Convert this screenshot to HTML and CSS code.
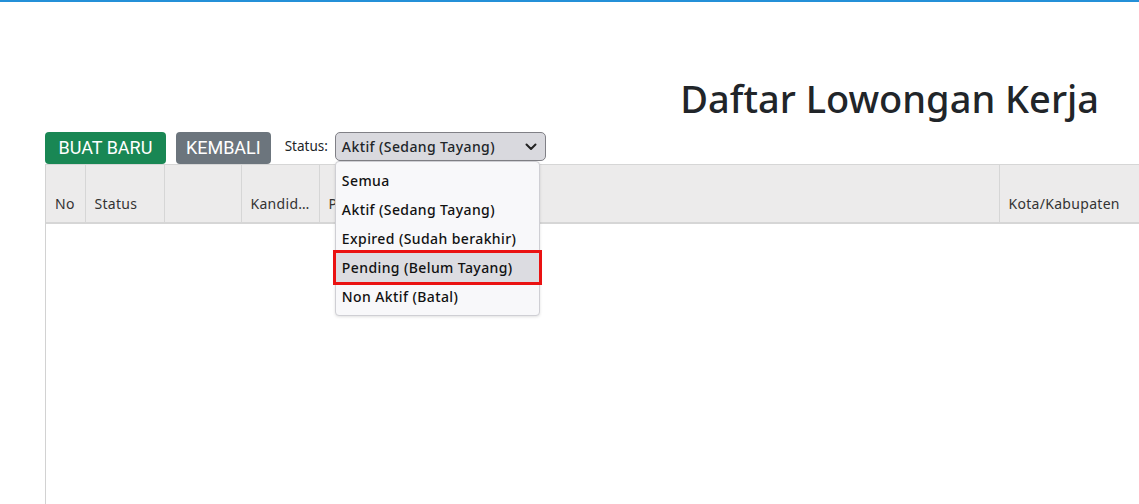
FILE: index.html
```html
<!DOCTYPE html>
<html lang="id">
<head>
    <meta charset="UTF-8">
    <meta name="viewport" content="width=device-width, initial-scale=1.0">
    <title>Daftar Lowongan Kerja</title>
    <link rel="stylesheet" href="styles.css">
</head>
<body>
    <div class="topbar"></div>

    <div class="content">
        <h1 class="page-title">Daftar Lowongan Kerja</h1>

        <!-- tombol dan filter status -->
        <div class="toolbar">
            <a href="javascript:;" class="btn btn-green">BUAT BARU</a>
            <a href="javascript:;" class="btn btn-gray">KEMBALI</a>
            <label class="filter-label">Status:</label>
            <div class="select-box">
                <div class="select">
                    <span>Aktif (Sedang Tayang)</span>
                    <svg class="chevron" width="12" height="8" viewBox="0 0 12 8"><path d="M1.5 1.5 6 6l4.5-4.5" fill="none" stroke="#222" stroke-width="2" stroke-linecap="round" stroke-linejoin="round"/></svg>
                </div>
                <ul class="select-list">
                    <li>Semua</li>
                    <li>Aktif (Sedang Tayang)</li>
                    <li>Expired (Sudah berakhir)</li>
                    <li class="hover">Pending (Belum Tayang)</li>
                    <li>Non Aktif (Batal)</li>
                </ul>
            </div>
        </div>

        <!-- tabel lowongan -->
        <div class="table-wrap">
            <table class="job-table">
                <thead>
                    <tr>
                        <th class="col-no">No</th>
                        <th class="col-status">Status</th>
                        <th class="col-blank"></th>
                        <th class="col-kandidat">Kandidat</th>
                        <th class="col-posisi">Posisi</th>
                        <th class="col-kota">Kota/Kabupaten</th>
                    </tr>
                </thead>
                <tbody></tbody>
            </table>
        </div>
    </div>
</body>
</html>
```

FILE: styles.css
```css
* {
    margin: 0;
    padding: 0;
    box-sizing: border-box;
}

body {
    font-family: "Noto Sans", "Open Sans", sans-serif;
    color: #212529;
    background: #fff;
    overflow: hidden;
    height: 504px;
}

a {
    text-decoration: none;
}

.topbar {
    height: 2px;
    background-color: #2490d8;
}

.content {
    padding-left: 45px;
    height: 502px;
    display: flex;
    flex-direction: column;
}

.page-title {
    margin-top: 72px;
    padding-right: 40px;
    text-align: right;
    font-size: 38px;
    font-weight: 500;
    line-height: 48px;
    color: #212529;
}

/* tombol + filter */

.toolbar {
    display: flex;
    align-items: flex-start;
    margin-top: 10px;
    height: 32px;
}

.btn {
    display: block;
    height: 32px;
    border-radius: 4px;
    font-family: Roboto, "Liberation Sans", sans-serif;
    font-size: 18px;
    line-height: 32px;
    color: #fff;
}

.btn-green {
    padding: 0 13.5px;
    background-color: #198754;
}

.btn-gray {
    margin-left: 10px;
    padding: 0 10px;
    background-color: #6c757d;
}

.filter-label {
    margin-left: 14px;
    font-size: 13.5px;
    line-height: 29px;
}

.select-box {
    position: relative;
    margin-left: 7px;
}

.select {
    display: flex;
    align-items: center;
    justify-content: space-between;
    width: 211px;
    height: 29px;
    padding: 0 8px 0 6px;
    border: 1px solid #808086;
    border-radius: 5px;
    background-color: #d9d9de;
    font-size: 14px;
    font-weight: 500;
    letter-spacing: .4px;
}

.chevron {
    margin-top: 1px;
}

.select-list {
    position: absolute;
    left: 0;
    top: 29px;
    width: 205px;
    padding: 4px 0;
    list-style: none;
    background-color: #f8f8fa;
    border: 1px solid #cfcfd4;
    border-radius: 4px;
    box-shadow: 0 1px 3px rgba(0, 0, 0, .12);
    z-index: 9;
}

.select-list li {
    height: 29px;
    padding-left: 6px;
    font-size: 14px;
    font-weight: 500;
    letter-spacing: .4px;
    line-height: 29px;
    color: #111;
}

.select-list li.hover {
    background-color: #dcdce1;
    outline: 3px solid #ea1212;
    outline-offset: 0;
}

/* tabel */

.table-wrap {
    flex: 1;
    border-left: 1px solid #d2d2d2;
    overflow: hidden;
}

.job-table {
    width: 1120px;
    border-collapse: collapse;
    table-layout: fixed;
}

.job-table th {
    height: 58px;
    padding: 0 9px 9px;
    vertical-align: bottom;
    text-align: left;
    font-size: 14px;
    font-weight: 400;
    letter-spacing: .3px;
    color: #333;
    background-color: #ecebeb;
    border-top: 1px solid #d6d6d6;
    border-bottom: 2px solid #d6d6d6;
    border-right: 1px solid #d6d6d6;
    white-space: nowrap;
    overflow: hidden;
    text-overflow: ellipsis;
}

.col-no { width: 39px; }
.col-status { width: 79px; }
.col-blank { width: 77px; }
.col-kandidat { width: 78px; }
.col-posisi { width: 680px; }
.col-kota { width: 167px; }
```
